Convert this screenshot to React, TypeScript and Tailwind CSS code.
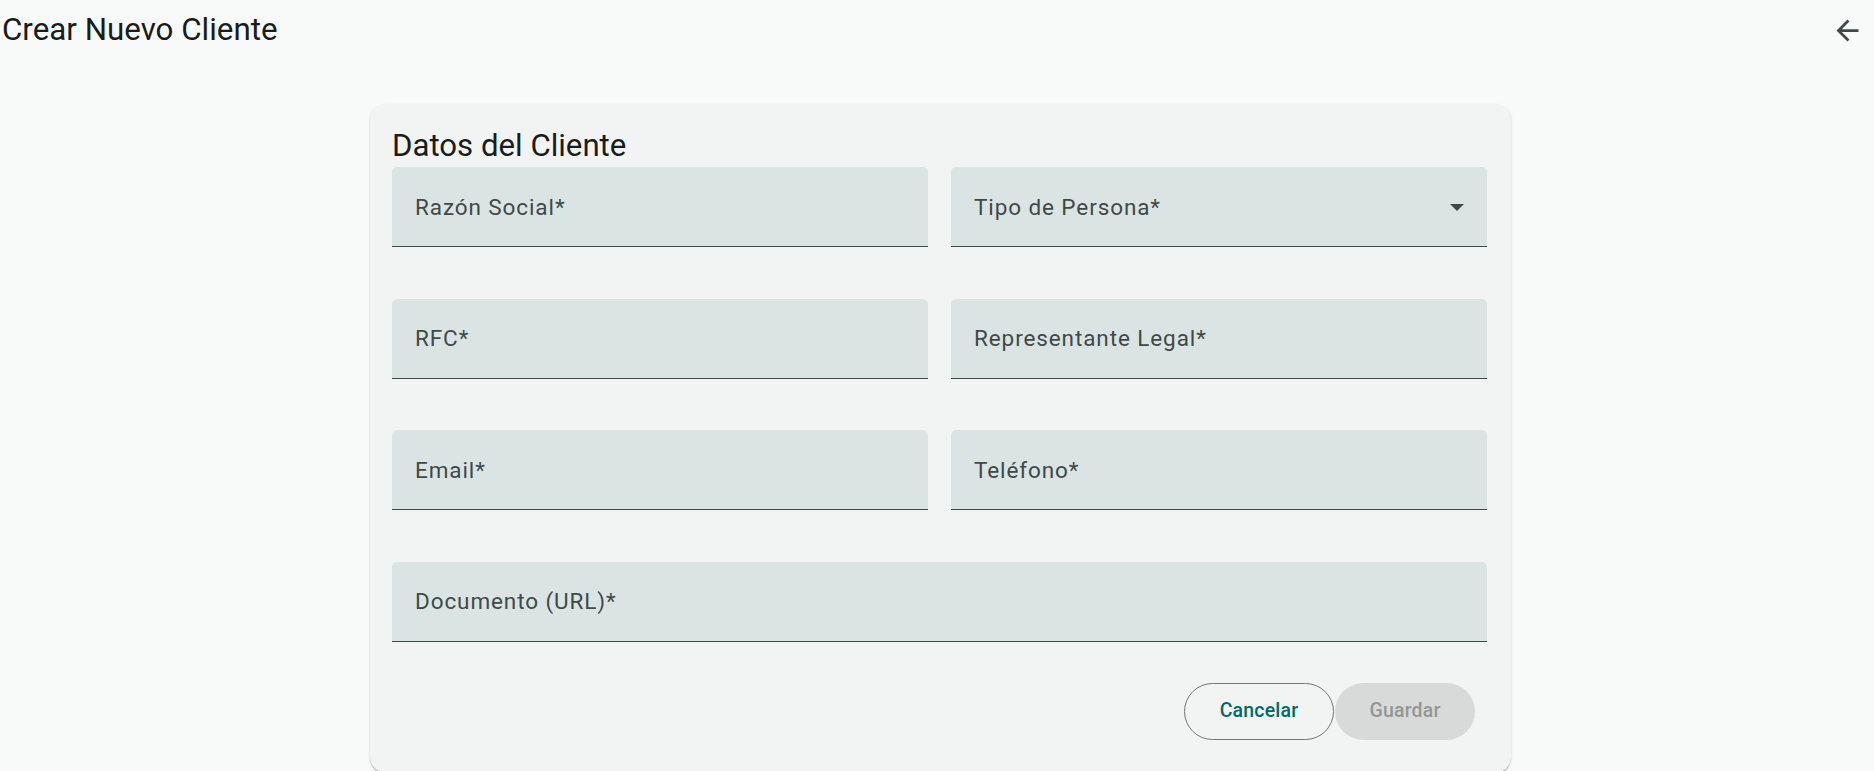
import type { ReactNode } from 'react'

const FIELDS = [
  { label: 'Razón Social*' },
  { label: 'Tipo de Persona*', select: true },
  { label: 'RFC*' },
  { label: 'Representante Legal*' },
  { label: 'Email*' },
  { label: 'Teléfono*' },
  { label: 'Documento (URL)*', wide: true },
]

function Field({ label, select, wide }: { label: string; select?: boolean; wide?: boolean }) {
  return (
    <div
      className={`h-[80px] flex items-center justify-between rounded-t-[5px] bg-[#dae5e3] border-b border-[#3f4948] pl-[23px] pr-[23px] ${
        wide ? 'col-span-2' : ''
      }`}
    >
      <span className="mt-[2px] text-[22.5px] tracking-[0.9px] text-[#3f4948]">{label}</span>
      {select && (
        <svg width="14" height="7" viewBox="0 0 14 7" className="mt-[2px]">
          <path d="M0 0h14L7 7z" fill="#3f4948" />
        </svg>
      )}
    </div>
  )
}

function Button({ children, variant }: { children: ReactNode; variant: 'outline' | 'disabled' }) {
  return variant === 'outline' ? (
    <button className="h-[57px] w-[150px] rounded-full border border-[#747775] text-[19.5px] font-medium tracking-[0.2px] text-[#006a6a]">
      {children}
    </button>
  ) : (
    <button disabled className="h-[57px] w-[140px] rounded-full bg-[#d8dada] text-[19.5px] font-medium tracking-[0.2px] text-[#949696]">
      {children}
    </button>
  )
}

export default function App() {
  return (
    <div className="min-h-screen bg-[#f8faf9] font-['Roboto',sans-serif] text-[#191c1c]">
      {/* Header */}
      <div className="flex items-start justify-between pt-[10px] pl-[2px] pr-[10px]">
        <h1 className="text-[31.3px] leading-[40px] font-normal">Crear Nuevo Cliente</h1>
        <button className="mt-[4px] flex h-[33px] w-[33px] items-center justify-center text-[#3f4948]">
          <svg width="33" height="33" viewBox="0 0 24 24" fill="currentColor">
            <path d="M20 11H7.83l5.59-5.59L12 4l-8 8 8 8 1.41-1.41L7.83 13H20v-2z" />
          </svg>
        </button>
      </div>

      {/* Card */}
      <div className="mt-[54px] ml-[370px] w-[1141px] rounded-[16px] bg-[#f2f4f3] pt-[22px] pb-[33px] pl-[22px] pr-[24px] shadow-[0_2px_1px_-1px_rgba(0,0,0,0.2),0_1px_1px_0_rgba(0,0,0,0.14),0_1px_3px_0_rgba(0,0,0,0.12)]">
        <h2 className="text-[31.2px] leading-[40px] font-normal">Datos del Cliente</h2>
        <div className="mt-[1px] grid grid-cols-2 gap-x-[23px] gap-y-[51.5px]">
          {FIELDS.map(f => (
            <Field key={f.label} label={f.label} select={f.select} wide={f.wide} />
          ))}
        </div>
        <div className="mt-[41px] flex justify-end gap-[1px] pr-[12px]">
          <Button variant="outline">Cancelar</Button>
          <Button variant="disabled">Guardar</Button>
        </div>
      </div>
    </div>
  )
}
